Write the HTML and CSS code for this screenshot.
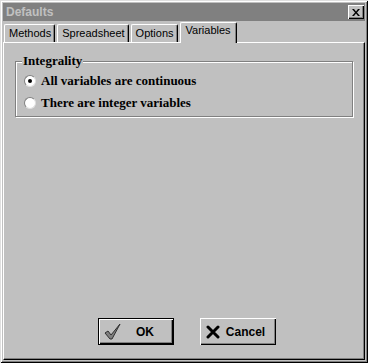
FILE: index.html
```html
<!DOCTYPE html>
<html lang="en">
<head>
    <meta charset="UTF-8">
    <title>Defaults</title>
    <link rel="stylesheet" href="styles.css">
</head>
<body>

    <div class="window">
        <div class="titlebar">
            <span class="title">Defaults</span>
            <span class="close">
                <svg width="8" height="7" viewBox="0 0 8 7">
                    <path d="M0 0h2l2 2.5 2-2.5h2l-3 3.5 3 3.5h-2l-2-2.5-2 2.5h-2l3-3.5z" fill="#000"/>
                </svg>
            </span>
        </div>

        <div class="tabs">
            <span class="tab">Methods</span>
            <span class="tab">Spreadsheet</span>
            <span class="tab">Options</span>
            <span class="tab active">Variables</span>
        </div>

        <div class="panel">
            <fieldset class="group">
                <legend>Integrality</legend>
                <label class="option">
                    <span class="radio checked"></span>
                    All variables are continuous
                </label>
                <label class="option">
                    <span class="radio"></span>
                    There are integer variables
                </label>
            </fieldset>

            <div class="buttons">
                <button class="btn default">
                    <svg class="icon" width="17" height="17" viewBox="0 0 17 17">
                        <path d="M1 10l3-2 3 4 9-11-8 15h-2z" fill="#808080" stroke="#303030" stroke-width="1" stroke-linejoin="round"/>
                    </svg>
                    <span class="label">OK</span>
                </button>
                <button class="btn">
                    <svg class="icon" width="14" height="14" viewBox="0 0 14 14">
                        <path d="M2 2l10 10M12 2l-10 10" stroke="#000" stroke-width="3" stroke-linecap="round"/>
                    </svg>
                    <span class="label">Cancel</span>
                </button>
            </div>
        </div>
    </div>

</body>
</html>
```

FILE: styles.css
```css
body {
    margin: 0;
    padding: 0;
    background-color: #c0c0c0;
    font-family: "Liberation Sans", Arial, sans-serif;
}

.window {
    width: 368px;
    height: 363px;
    box-sizing: border-box;
    padding: 3px;
    background-color: #c0c0c0;
    box-shadow: inset 1px 1px #dfdfdf, inset -1px -1px #000, inset 2px 2px #fff, inset -2px -2px #808080;
    display: flex;
    flex-direction: column;
}

.titlebar {
    height: 18px;
    background-color: #808080;
    display: flex;
    align-items: center;
    justify-content: space-between;
    padding: 0 1px 0 3px;
}

.title {
    color: #c0c0c0;
    font-weight: bold;
    font-size: 12px;
}

.close {
    width: 16px;
    height: 14px;
    box-sizing: border-box;
    background-color: #c0c0c0;
    box-shadow: inset 1px 1px #fff, inset -1px -1px #000, inset -2px -2px #808080;
    display: flex;
    align-items: center;
    justify-content: center;
}

/* tab strip */
.tabs {
    display: flex;
    align-items: flex-end;
    height: 20px;
    margin-top: 1px;
    padding-left: 1px;
    position: relative;
    z-index: 1;
}

.tab {
    height: 18px;
    box-sizing: border-box;
    padding: 2px 3px 0 4px;
    margin-right: 2px;
    font-size: 11px;
    color: #000;
    border-top: 1px solid #fff;
    border-left: 1px solid #fff;
    border-right: 1px solid #000;
    border-radius: 2px 2px 0 0;
    box-shadow: inset -1px 0 #808080;
}

.tab.active {
    height: 21px;
    margin-bottom: -1px;
    background-color: #c0c0c0;
    padding: 1px 5px 0 5px;
}

.panel {
    flex: 1;
    display: flex;
    flex-direction: column;
    border-top: 1px solid #fff;
    border-left: 1px solid #fff;
    border-right: 1px solid #000;
    border-bottom: 1px solid #000;
    box-shadow: inset -1px -1px #808080;
    padding: 11px 11px 0 11px;
}

.group {
    margin: 0;
    padding: 2px 8px 2px 8px;
    border: 1px solid #808080;
    box-shadow: 1px 1px 0 #fff, inset 1px 1px 0 #fff;
    font-family: "Liberation Serif", "Times New Roman", serif;
    font-weight: bold;
    font-size: 13px;
}

.group legend {
    padding: 0 1px;
    margin-left: -2px;
    background-color: #c0c0c0;
    line-height: 14px;
}

.option {
    display: flex;
    align-items: center;
    gap: 5px;
    height: 22px;
}

.radio {
    width: 12px;
    height: 12px;
    box-sizing: border-box;
    border-radius: 50%;
    background-color: #fff;
    border: 1px solid;
    border-color: #808080 #dfdfdf #dfdfdf #808080;
    display: flex;
    align-items: center;
    justify-content: center;
}

.radio.checked::after {
    content: "";
    width: 4px;
    height: 4px;
    border-radius: 50%;
    background-color: #000;
}

.buttons {
    margin-top: auto;
    margin-bottom: 14px;
    display: flex;
    justify-content: center;
    gap: 26px;
    padding-left: 5px;
}

.btn {
    width: 76px;
    height: 27px;
    box-sizing: border-box;
    padding: 0 4px;
    border: none;
    background-color: #c0c0c0;
    box-shadow: inset 1px 1px #fff, inset -1px -1px #000, inset -2px -2px #808080;
    display: flex;
    align-items: center;
    font-family: "Liberation Sans", Arial, sans-serif;
    font-weight: bold;
    font-size: 12px;
    color: #000;
}

.btn.default {
    box-shadow: inset 0 0 0 1px #000, inset 2px 2px #fff, inset -2px -2px #000, inset -3px -3px #808080;
}

.btn .label {
    flex: 1;
    text-align: center;
}

.btn .icon {
    margin-left: 2px;
}
```
